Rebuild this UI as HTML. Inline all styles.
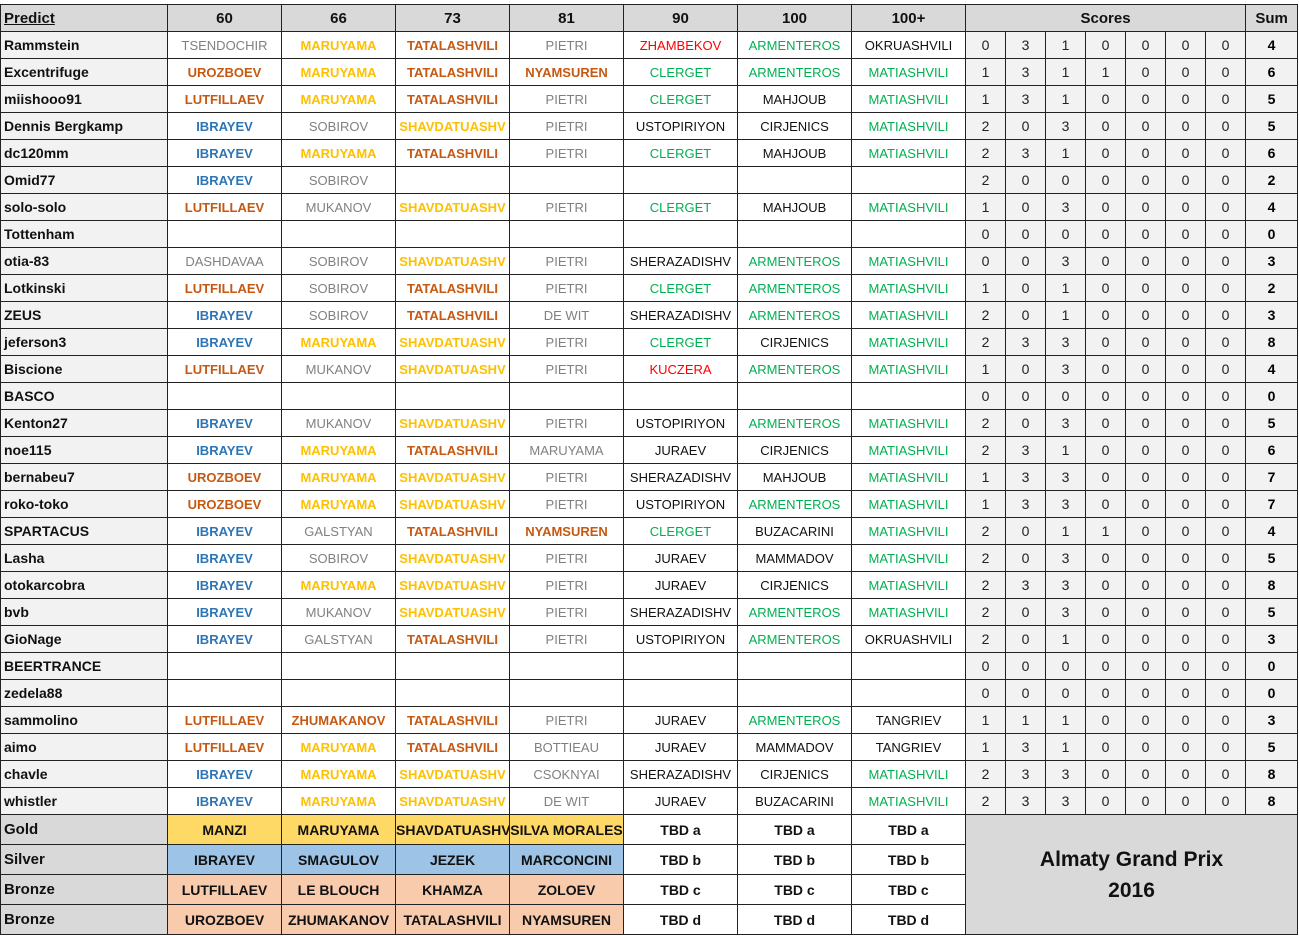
<!DOCTYPE html>
<html><head><meta charset="utf-8"><style>
body{margin:0;background:#fff;width:1299px;height:936px;overflow:hidden;font-family:"Liberation Sans",Arial,sans-serif}
table{position:absolute;left:0;top:4px;width:1297px;border-collapse:collapse;table-layout:fixed}
td{border:1px solid #222;padding:0;height:26px;text-align:center;font-size:13px;white-space:nowrap;overflow:hidden;background:#fff}
td:first-child{text-align:left;padding-left:3px;font-weight:bold;font-size:14px;background:#f2f2f2;color:#111}
tr.h td{background:#d9d9d9;font-weight:bold;font-size:15px;color:#111}
tr.h td:first-child{background:#d9d9d9;text-decoration:underline;font-size:15px}
td.s{background:#f2f2f2;font-size:14px;color:#222}
td.t{background:#f2f2f2;font-weight:bold;font-size:14px}
.o{color:#c65911;font-weight:bold}.y{color:#ffc000;font-weight:bold}.g{color:#808080}.b{color:#2e75b6;font-weight:bold}.n{color:#00b050}.r{color:#ff0000}.k{color:#111}
tr.m td{height:29px;font-weight:bold;font-size:14px;color:#111;line-height:16px}
tr.m td:first-child{background:#d9d9d9;font-size:15px}
.G{background:#ffd966!important}.S{background:#9dc3e6!important}.B{background:#f8cbad!important}
tr.m td.al{background:#d9d9d9;font-size:21px;line-height:31px;font-weight:bold;color:#111}
</style></head><body>
<table>
<colgroup><col style="width:167px"><col style="width:114px"><col style="width:114px"><col style="width:114px"><col style="width:114px"><col style="width:114px"><col style="width:114px"><col style="width:114px"><col style="width:40px"><col style="width:40px"><col style="width:40px"><col style="width:40px"><col style="width:40px"><col style="width:40px"><col style="width:40px"><col style="width:52px"></colgroup>
<tr class="h"><td>Predict</td><td>60</td><td>66</td><td>73</td><td>81</td><td>90</td><td>100</td><td>100+</td><td colspan="7">Scores</td><td>Sum</td></tr>
<tr><td>Rammstein</td><td class="g">TSENDOCHIR</td><td class="y">MARUYAMA</td><td class="o">TATALASHVILI</td><td class="g">PIETRI</td><td class="r">ZHAMBEKOV</td><td class="n">ARMENTEROS</td><td class="k">OKRUASHVILI</td><td class="s">0</td><td class="s">3</td><td class="s">1</td><td class="s">0</td><td class="s">0</td><td class="s">0</td><td class="s">0</td><td class="t">4</td></tr>
<tr><td>Excentrifuge</td><td class="o">UROZBOEV</td><td class="y">MARUYAMA</td><td class="o">TATALASHVILI</td><td class="o">NYAMSUREN</td><td class="n">CLERGET</td><td class="n">ARMENTEROS</td><td class="n">MATIASHVILI</td><td class="s">1</td><td class="s">3</td><td class="s">1</td><td class="s">1</td><td class="s">0</td><td class="s">0</td><td class="s">0</td><td class="t">6</td></tr>
<tr><td>miishooo91</td><td class="o">LUTFILLAEV</td><td class="y">MARUYAMA</td><td class="o">TATALASHVILI</td><td class="g">PIETRI</td><td class="n">CLERGET</td><td class="k">MAHJOUB</td><td class="n">MATIASHVILI</td><td class="s">1</td><td class="s">3</td><td class="s">1</td><td class="s">0</td><td class="s">0</td><td class="s">0</td><td class="s">0</td><td class="t">5</td></tr>
<tr><td>Dennis Bergkamp</td><td class="b">IBRAYEV</td><td class="g">SOBIROV</td><td class="y">SHAVDATUASHV</td><td class="g">PIETRI</td><td class="k">USTOPIRIYON</td><td class="k">CIRJENICS</td><td class="n">MATIASHVILI</td><td class="s">2</td><td class="s">0</td><td class="s">3</td><td class="s">0</td><td class="s">0</td><td class="s">0</td><td class="s">0</td><td class="t">5</td></tr>
<tr><td>dc120mm</td><td class="b">IBRAYEV</td><td class="y">MARUYAMA</td><td class="o">TATALASHVILI</td><td class="g">PIETRI</td><td class="n">CLERGET</td><td class="k">MAHJOUB</td><td class="n">MATIASHVILI</td><td class="s">2</td><td class="s">3</td><td class="s">1</td><td class="s">0</td><td class="s">0</td><td class="s">0</td><td class="s">0</td><td class="t">6</td></tr>
<tr><td>Omid77</td><td class="b">IBRAYEV</td><td class="g">SOBIROV</td><td></td><td></td><td></td><td></td><td></td><td class="s">2</td><td class="s">0</td><td class="s">0</td><td class="s">0</td><td class="s">0</td><td class="s">0</td><td class="s">0</td><td class="t">2</td></tr>
<tr><td>solo-solo</td><td class="o">LUTFILLAEV</td><td class="g">MUKANOV</td><td class="y">SHAVDATUASHV</td><td class="g">PIETRI</td><td class="n">CLERGET</td><td class="k">MAHJOUB</td><td class="n">MATIASHVILI</td><td class="s">1</td><td class="s">0</td><td class="s">3</td><td class="s">0</td><td class="s">0</td><td class="s">0</td><td class="s">0</td><td class="t">4</td></tr>
<tr><td>Tottenham</td><td></td><td></td><td></td><td></td><td></td><td></td><td></td><td class="s">0</td><td class="s">0</td><td class="s">0</td><td class="s">0</td><td class="s">0</td><td class="s">0</td><td class="s">0</td><td class="t">0</td></tr>
<tr><td>otia-83</td><td class="g">DASHDAVAA</td><td class="g">SOBIROV</td><td class="y">SHAVDATUASHV</td><td class="g">PIETRI</td><td class="k">SHERAZADISHV</td><td class="n">ARMENTEROS</td><td class="n">MATIASHVILI</td><td class="s">0</td><td class="s">0</td><td class="s">3</td><td class="s">0</td><td class="s">0</td><td class="s">0</td><td class="s">0</td><td class="t">3</td></tr>
<tr><td>Lotkinski</td><td class="o">LUTFILLAEV</td><td class="g">SOBIROV</td><td class="o">TATALASHVILI</td><td class="g">PIETRI</td><td class="n">CLERGET</td><td class="n">ARMENTEROS</td><td class="n">MATIASHVILI</td><td class="s">1</td><td class="s">0</td><td class="s">1</td><td class="s">0</td><td class="s">0</td><td class="s">0</td><td class="s">0</td><td class="t">2</td></tr>
<tr><td>ZEUS</td><td class="b">IBRAYEV</td><td class="g">SOBIROV</td><td class="o">TATALASHVILI</td><td class="g">DE WIT</td><td class="k">SHERAZADISHV</td><td class="n">ARMENTEROS</td><td class="n">MATIASHVILI</td><td class="s">2</td><td class="s">0</td><td class="s">1</td><td class="s">0</td><td class="s">0</td><td class="s">0</td><td class="s">0</td><td class="t">3</td></tr>
<tr><td>jeferson3</td><td class="b">IBRAYEV</td><td class="y">MARUYAMA</td><td class="y">SHAVDATUASHV</td><td class="g">PIETRI</td><td class="n">CLERGET</td><td class="k">CIRJENICS</td><td class="n">MATIASHVILI</td><td class="s">2</td><td class="s">3</td><td class="s">3</td><td class="s">0</td><td class="s">0</td><td class="s">0</td><td class="s">0</td><td class="t">8</td></tr>
<tr><td>Biscione</td><td class="o">LUTFILLAEV</td><td class="g">MUKANOV</td><td class="y">SHAVDATUASHV</td><td class="g">PIETRI</td><td class="r">KUCZERA</td><td class="n">ARMENTEROS</td><td class="n">MATIASHVILI</td><td class="s">1</td><td class="s">0</td><td class="s">3</td><td class="s">0</td><td class="s">0</td><td class="s">0</td><td class="s">0</td><td class="t">4</td></tr>
<tr><td>BASCO</td><td></td><td></td><td></td><td></td><td></td><td></td><td></td><td class="s">0</td><td class="s">0</td><td class="s">0</td><td class="s">0</td><td class="s">0</td><td class="s">0</td><td class="s">0</td><td class="t">0</td></tr>
<tr><td>Kenton27</td><td class="b">IBRAYEV</td><td class="g">MUKANOV</td><td class="y">SHAVDATUASHV</td><td class="g">PIETRI</td><td class="k">USTOPIRIYON</td><td class="n">ARMENTEROS</td><td class="n">MATIASHVILI</td><td class="s">2</td><td class="s">0</td><td class="s">3</td><td class="s">0</td><td class="s">0</td><td class="s">0</td><td class="s">0</td><td class="t">5</td></tr>
<tr><td>noe115</td><td class="b">IBRAYEV</td><td class="y">MARUYAMA</td><td class="o">TATALASHVILI</td><td class="g">MARUYAMA</td><td class="k">JURAEV</td><td class="k">CIRJENICS</td><td class="n">MATIASHVILI</td><td class="s">2</td><td class="s">3</td><td class="s">1</td><td class="s">0</td><td class="s">0</td><td class="s">0</td><td class="s">0</td><td class="t">6</td></tr>
<tr><td>bernabeu7</td><td class="o">UROZBOEV</td><td class="y">MARUYAMA</td><td class="y">SHAVDATUASHV</td><td class="g">PIETRI</td><td class="k">SHERAZADISHV</td><td class="k">MAHJOUB</td><td class="n">MATIASHVILI</td><td class="s">1</td><td class="s">3</td><td class="s">3</td><td class="s">0</td><td class="s">0</td><td class="s">0</td><td class="s">0</td><td class="t">7</td></tr>
<tr><td>roko-toko</td><td class="o">UROZBOEV</td><td class="y">MARUYAMA</td><td class="y">SHAVDATUASHV</td><td class="g">PIETRI</td><td class="k">USTOPIRIYON</td><td class="n">ARMENTEROS</td><td class="n">MATIASHVILI</td><td class="s">1</td><td class="s">3</td><td class="s">3</td><td class="s">0</td><td class="s">0</td><td class="s">0</td><td class="s">0</td><td class="t">7</td></tr>
<tr><td>SPARTACUS</td><td class="b">IBRAYEV</td><td class="g">GALSTYAN</td><td class="o">TATALASHVILI</td><td class="o">NYAMSUREN</td><td class="n">CLERGET</td><td class="k">BUZACARINI</td><td class="n">MATIASHVILI</td><td class="s">2</td><td class="s">0</td><td class="s">1</td><td class="s">1</td><td class="s">0</td><td class="s">0</td><td class="s">0</td><td class="t">4</td></tr>
<tr><td>Lasha</td><td class="b">IBRAYEV</td><td class="g">SOBIROV</td><td class="y">SHAVDATUASHV</td><td class="g">PIETRI</td><td class="k">JURAEV</td><td class="k">MAMMADOV</td><td class="n">MATIASHVILI</td><td class="s">2</td><td class="s">0</td><td class="s">3</td><td class="s">0</td><td class="s">0</td><td class="s">0</td><td class="s">0</td><td class="t">5</td></tr>
<tr><td>otokarcobra</td><td class="b">IBRAYEV</td><td class="y">MARUYAMA</td><td class="y">SHAVDATUASHV</td><td class="g">PIETRI</td><td class="k">JURAEV</td><td class="k">CIRJENICS</td><td class="n">MATIASHVILI</td><td class="s">2</td><td class="s">3</td><td class="s">3</td><td class="s">0</td><td class="s">0</td><td class="s">0</td><td class="s">0</td><td class="t">8</td></tr>
<tr><td>bvb</td><td class="b">IBRAYEV</td><td class="g">MUKANOV</td><td class="y">SHAVDATUASHV</td><td class="g">PIETRI</td><td class="k">SHERAZADISHV</td><td class="n">ARMENTEROS</td><td class="n">MATIASHVILI</td><td class="s">2</td><td class="s">0</td><td class="s">3</td><td class="s">0</td><td class="s">0</td><td class="s">0</td><td class="s">0</td><td class="t">5</td></tr>
<tr><td>GioNage</td><td class="b">IBRAYEV</td><td class="g">GALSTYAN</td><td class="o">TATALASHVILI</td><td class="g">PIETRI</td><td class="k">USTOPIRIYON</td><td class="n">ARMENTEROS</td><td class="k">OKRUASHVILI</td><td class="s">2</td><td class="s">0</td><td class="s">1</td><td class="s">0</td><td class="s">0</td><td class="s">0</td><td class="s">0</td><td class="t">3</td></tr>
<tr><td>BEERTRANCE</td><td></td><td></td><td></td><td></td><td></td><td></td><td></td><td class="s">0</td><td class="s">0</td><td class="s">0</td><td class="s">0</td><td class="s">0</td><td class="s">0</td><td class="s">0</td><td class="t">0</td></tr>
<tr><td>zedela88</td><td></td><td></td><td></td><td></td><td></td><td></td><td></td><td class="s">0</td><td class="s">0</td><td class="s">0</td><td class="s">0</td><td class="s">0</td><td class="s">0</td><td class="s">0</td><td class="t">0</td></tr>
<tr><td>sammolino</td><td class="o">LUTFILLAEV</td><td class="o">ZHUMAKANOV</td><td class="o">TATALASHVILI</td><td class="g">PIETRI</td><td class="k">JURAEV</td><td class="n">ARMENTEROS</td><td class="k">TANGRIEV</td><td class="s">1</td><td class="s">1</td><td class="s">1</td><td class="s">0</td><td class="s">0</td><td class="s">0</td><td class="s">0</td><td class="t">3</td></tr>
<tr><td>aimo</td><td class="o">LUTFILLAEV</td><td class="y">MARUYAMA</td><td class="o">TATALASHVILI</td><td class="g">BOTTIEAU</td><td class="k">JURAEV</td><td class="k">MAMMADOV</td><td class="k">TANGRIEV</td><td class="s">1</td><td class="s">3</td><td class="s">1</td><td class="s">0</td><td class="s">0</td><td class="s">0</td><td class="s">0</td><td class="t">5</td></tr>
<tr><td>chavle</td><td class="b">IBRAYEV</td><td class="y">MARUYAMA</td><td class="y">SHAVDATUASHV</td><td class="g">CSOKNYAI</td><td class="k">SHERAZADISHV</td><td class="k">CIRJENICS</td><td class="n">MATIASHVILI</td><td class="s">2</td><td class="s">3</td><td class="s">3</td><td class="s">0</td><td class="s">0</td><td class="s">0</td><td class="s">0</td><td class="t">8</td></tr>
<tr><td>whistler</td><td class="b">IBRAYEV</td><td class="y">MARUYAMA</td><td class="y">SHAVDATUASHV</td><td class="g">DE WIT</td><td class="k">JURAEV</td><td class="k">BUZACARINI</td><td class="n">MATIASHVILI</td><td class="s">2</td><td class="s">3</td><td class="s">3</td><td class="s">0</td><td class="s">0</td><td class="s">0</td><td class="s">0</td><td class="t">8</td></tr>
<tr class="m"><td>Gold</td><td class="G">MANZI</td><td class="G">MARUYAMA</td><td class="G">SHAVDATUASHV</td><td class="G">SILVA MORALES</td><td>TBD a</td><td>TBD a</td><td>TBD a</td><td colspan="8" rowspan="4" class="al">Almaty Grand Prix<br>2016</td></tr>
<tr class="m"><td>Silver</td><td class="S">IBRAYEV</td><td class="S">SMAGULOV</td><td class="S">JEZEK</td><td class="S">MARCONCINI</td><td>TBD b</td><td>TBD b</td><td>TBD b</td></tr>
<tr class="m"><td>Bronze</td><td class="B">LUTFILLAEV</td><td class="B">LE BLOUCH</td><td class="B">KHAMZA</td><td class="B">ZOLOEV</td><td>TBD c</td><td>TBD c</td><td>TBD c</td></tr>
<tr class="m"><td>Bronze</td><td class="B">UROZBOEV</td><td class="B">ZHUMAKANOV</td><td class="B">TATALASHVILI</td><td class="B">NYAMSUREN</td><td>TBD d</td><td>TBD d</td><td>TBD d</td></tr>
</table>
</body></html>
